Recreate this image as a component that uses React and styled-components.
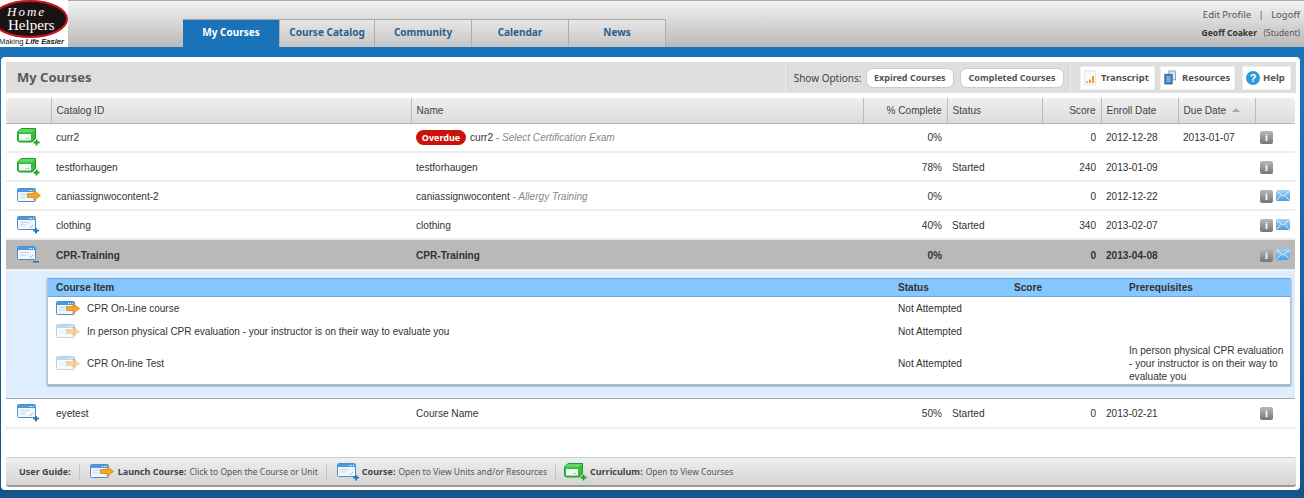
import styled, { createGlobalStyle } from "styled-components";

const GlobalStyle = createGlobalStyle`
  html, body {
    margin: 0;
    height: 498px;
    overflow: hidden;
    background: linear-gradient(#1a72b8 0, #1a72b8 100px, #12558a 498px);
    font-family: "Liberation Sans", Arial, sans-serif;
  }
`;

const tahoma = `"Noto Sans", "DejaVu Sans", sans-serif`;

const courses = [
  { icon: "curriculum", id: "curr2", overdue: true, name: "curr2", sub: "Select Certification Exam", pct: "0%", status: "", score: "0", enroll: "2012-12-28", due: "2013-01-07" },
  { icon: "curriculum", id: "testforhaugen", name: "testforhaugen", pct: "78%", status: "Started", score: "240", enroll: "2013-01-09", due: "" },
  { icon: "launch", id: "caniassignwocontent-2", name: "caniassignwocontent", sub: "Allergy Training", pct: "0%", status: "", score: "0", enroll: "2012-12-22", due: "", mail: true },
  { icon: "course", id: "clothing", name: "clothing", pct: "40%", status: "Started", score: "340", enroll: "2013-02-07", due: "", mail: true },
  { icon: "open", id: "CPR-Training", name: "CPR-Training", pct: "0%", status: "", score: "0", enroll: "2013-04-08", due: "", mail: true, selected: true },
  { icon: "course", id: "eyetest", name: "Course Name", pct: "50%", status: "Started", score: "0", enroll: "2013-02-21", due: "" },
];

const items = [
  { name: "CPR On-Line course", status: "Not Attempted", faded: false, prereq: "" },
  { name: "In person physical CPR evaluation - your instructor is on their way to evaluate you", status: "Not Attempted", faded: true, prereq: "" },
  { name: "CPR On-line Test", status: "Not Attempted", faded: true, prereq: "In person physical CPR evaluation - your instructor is on their way to evaluate you" },
];

const WindowShape = ({ faded }) => (
  <g opacity={faded ? 0.38 : 1}>
    <rect x="0.5" y="0.5" width="18" height="13" rx="1" fill="#f1f6fb" stroke="#4f8fc8" />
    <rect x="1" y="1" width="17" height="3" fill="#4a9ae0" />
    <path d="M12 2.500h1M14 2.500h1M16 2.500h1" stroke="#fff" />
    <path d="M3 6.500h9M3 9h6" stroke="#c8d6e4" />
  </g>
);

const CourseIcon = ({ minus }) => (
  <svg width="22" height="18" viewBox="0 0 22 18">
    <WindowShape />
    <path d="M13 12l3-3" stroke="#9ab8d4" />
    {minus ? (
      <rect x="16" y="15" width="6" height="1.500" fill="#2a70a8" />
    ) : (
      <path d="M19 12v5.500M16.200 14.700H22" stroke="#1f72b4" strokeWidth="1.800" />
    )}
  </svg>
);

const LaunchIcon = ({ faded }) => (
  <svg width="25" height="16" viewBox="0 0 25 16">
    <WindowShape faded={faded} />
    <path
      d="M10.500 5.500h6.500V2.500l6.500 5-6.500 5v-3h-6.500z"
      fill="#f5a623"
      stroke="#c9831a"
      strokeWidth="0.700"
      opacity={faded ? 0.42 : 1}
    />
  </svg>
);

const CurriculumIcon = () => (
  <svg width="23" height="18" viewBox="0 0 23 18">
    <path d="M0.500 4L4 0.500H18.500V10.500L15 14H2L0.500 12.500z" fill="#35bc3c" stroke="#249a2c" />
    <path d="M1 4.200L4.200 1H18L15 4.200z" fill="#5fd565" />
    <rect x="2" y="6" width="12" height="6.500" fill="#f2faf2" />
    <path d="M9 10.500h1M11 10.500h1" stroke="#6fbf75" />
    <path d="M19.500 11.500v6M16.500 14.500h6" stroke="#17a326" strokeWidth="1.800" />
  </svg>
);

const RowIcon = ({ type }) => {
  if (type === "curriculum") return <CurriculumIcon />;
  if (type === "launch") return <LaunchIcon />;
  if (type === "open") return <CourseIcon minus />;
  return <CourseIcon />;
};

const InfoBtn = styled.span`
  display: inline-flex;
  align-items: center;
  justify-content: center;
  width: 13px;
  height: 13px;
  border-radius: 2px;
  background: linear-gradient(#b8b8b8, #757575);
  color: #fff;
  font: bold 10px "Liberation Serif", serif;
`;

const MailIcon = () => (
  <svg width="14" height="12" viewBox="0 0 14 12">
    <defs>
      <linearGradient id="mailFill" x1="0" y1="0" x2="0" y2="1">
        <stop offset="0" stopColor="#a4d2f3" />
        <stop offset="1" stopColor="#4a9cdc" />
      </linearGradient>
    </defs>
    <rect width="14" height="11" rx="1" fill="url(#mailFill)" />
    <path d="M0.500 1l6.500 5 6.500-5M0.500 10.500L5 5.500M13.500 10.500L9 5.500" fill="none" stroke="#e3f2fc" />
  </svg>
);

const ChartIcon = () => (
  <svg width="12" height="16" viewBox="0 0 12 16">
    <rect x="0.500" y="1" width="11" height="14" fill="#f8f8f8" stroke="#e6e6e6" />
    <path d="M3 13v-1.500M6 13v-3.500M9 13v-7" stroke="#f0a020" strokeWidth="2" />
  </svg>
);

const ResIcon = () => (
  <svg width="13" height="17" viewBox="0 0 16 17">
    <rect x="6" y="0.500" width="8" height="11" fill="#dfe6ee" stroke="#8093a8" />
    <rect x="1" y="4.500" width="9" height="12" fill="#3d84c4" stroke="#245f96" />
    <path d="M3 8h5M3 10.500h5M3 13h5" stroke="#d5e8f8" />
  </svg>
);

const HelpIcon = () => (
  <svg width="14" height="14" viewBox="0 0 14 14">
    <circle cx="7" cy="7" r="7" fill="#2a9bd8" />
    <text x="7" y="11" textAnchor="middle" fontSize="11" fontWeight="bold" fill="#fff" fontFamily="Liberation Sans">?</text>
  </svg>
);

const Logo = () => (
  <svg width="68" height="47" viewBox="0 0 68 47">
    <rect width="68" height="47" fill="#fff" />
    <ellipse cx="30" cy="19" rx="37" ry="18" fill="#1b1313" stroke="#c8141e" strokeWidth="2" />
    <text x="7" y="16" fill="#fff" fontFamily="Liberation Serif" fontStyle="italic" fontSize="13" letterSpacing="2">Home</text>
    <text x="8" y="29.500" fill="#fff" fontFamily="Liberation Serif" fontSize="15">Helpers</text>
    <text x="-1" y="44" fill="#222" fontFamily="Liberation Sans" fontSize="7.600">Making <tspan fontStyle="italic" fontWeight="bold">Life Easier</tspan></text>
  </svg>
);

const App = () => {
  return (
    <>
      <GlobalStyle />
      <Header>
        <Logo />
        <Tabs>
          <Tab $active>My Courses</Tab>
          <Tab $w={95}>Course Catalog</Tab>
          <Tab $w={97}>Community</Tab>
          <Tab>Calendar</Tab>
          <Tab>News</Tab>
        </Tabs>
        <UserBox>
          <div>Edit Profile &nbsp; | &nbsp; Logoff</div>
          <UserLine><b>Geoff Coaker</b> &nbsp; (Student)</UserLine>
        </UserBox>
      </Header>
      <Panel>
        <TitleBar>
          <Title>My Courses</Title>
          <Options>
            <OptionLabel>Show Options:</OptionLabel>
            <Pill>Expired Courses</Pill>
            <Pill>Completed Courses</Pill>
          </Options>
          <Tools>
            <ToolBtn><ChartIcon />Transcript</ToolBtn>
            <ToolBtn><ResIcon />Resources</ToolBtn>
            <ToolBtn $help><HelpIcon />Help</ToolBtn>
          </Tools>
        </TitleBar>
        <Grid>
          <colgroup>
            <col width="45" />
            <col width="360" />
            <col width="452" />
            <col width="84" />
            <col width="95" />
            <col width="59" />
            <col width="77" />
            <col width="77" />
            <col width="40" />
          </colgroup>
          <thead>
            <tr>
              <Th />
              <Th>Catalog ID</Th>
              <Th>Name</Th>
              <Th $right>% Complete</Th>
              <Th>Status</Th>
              <Th $right>Score</Th>
              <Th>Enroll Date</Th>
              <Th>Due Date <SortArrow /></Th>
              <Th />
            </tr>
          </thead>
          <tbody>
            {courses.map((c) => (
              <CourseRows key={c.id} c={c} />
            ))}
          </tbody>
        </Grid>
        <Footer>
          <GuideLabel>User Guide:</GuideLabel>
          <GuideItem><LaunchIcon /><b>Launch Course:</b><span>Click to Open the Course or Unit</span></GuideItem>
          <GuideItem><CourseIcon /><b>Course:</b><span>Open to View Units and/or Resources</span></GuideItem>
          <GuideItem $tight><CurriculumIcon /><b>Curriculum:</b><span>Open to View Courses</span></GuideItem>
        </Footer>
      </Panel>
    </>
  );
};

const CourseRows = ({ c }) => (
  <>
    <Row $selected={c.selected}>
      <IconCell><RowIcon type={c.icon} /></IconCell>
      <Td>{c.id}</Td>
      <Td>
        {c.overdue && <Badge>Overdue</Badge>}
        {c.name}
        {c.sub && <Sub> - {c.sub}</Sub>}
      </Td>
      <Td $right>{c.pct}</Td>
      <Td>{c.status}</Td>
      <Td $right>{c.score}</Td>
      <Td>{c.enroll}</Td>
      <Td>{c.due}</Td>
      <ActionCell>
        <InfoBtn>i</InfoBtn>
        {c.mail && <MailIcon />}
      </ActionCell>
    </Row>
    {c.selected && (
      <tr>
        <Expanded colSpan={9}>
          <SubTable>
            <SubHead>
              <span>Course Item</span>
              <span>Status</span>
              <span>Score</span>
              <span>Prerequisites</span>
            </SubHead>
            {items.map((it) => (
              <SubRow key={it.name} $tall={!!it.prereq}>
                <ItemName><LaunchIcon faded={it.faded} />{it.name}</ItemName>
                <span>{it.status}</span>
                <span />
                <span>{it.prereq}</span>
              </SubRow>
            ))}
          </SubTable>
        </Expanded>
      </tr>
    )}
  </>
);

export default App;

const Header = styled.header`
  height: 46px;
  border-top: 1px solid #aaa;
  display: flex;
  align-items: flex-end;
  background: linear-gradient(#f2f2f2, #b9b9b9);
  box-sizing: content-box;
  > svg { margin-top: -1px; flex: none; display: block; }
`;

const Tabs = styled.nav`
  display: flex;
  margin-left: 115px;
  height: 28px;
`;

const Tab = styled.div`
  width: ${(p) => p.$w || 97}px;
  box-sizing: border-box;
  padding-bottom: 3px;
  display: flex;
  align-items: center;
  justify-content: center;
  font: bold 10px ${tahoma};
  color: ${(p) => (p.$active ? "#fff" : "#2b5f8c")};
  background: ${(p) => (p.$active ? "#1a72b8" : "linear-gradient(#e6e6e6, #c6c6c6)")};
  border-right: 1px solid #aeaeae;
  border-top: 1px solid #a5a5a5;
`;

const UserBox = styled.div`
  margin-left: auto;
  align-self: flex-start;
  padding: 8px 4px 0 0;
  text-align: right;
  font: 9.500px/12px ${tahoma};
  color: #555;
`;

const UserLine = styled.div`
  margin-top: 6px;
  font-size: 8.500px;
  b { color: #333; }
`;

const Panel = styled.main`
  margin: 10px 4px 0 1px;
  padding: 5px 4px 3px 5px;
  height: 425px;
  background: #fff;
  border-radius: 4px;
  display: flex;
  flex-direction: column;
`;

const TitleBar = styled.div`
  height: 31px;
  flex: none;
  display: flex;
  align-items: center;
  background: #dedede;
  padding-left: 11px;
`;

const Title = styled.h1`
  margin: 0 0 2px;
  font: bold 13px ${tahoma};
  color: #5a5a5a;
  flex: 1;
`;

const Options = styled.div`
  display: flex;
  align-items: center;
  gap: 6px;
  height: 31px;
  padding: 0 6px 0 8px;
  border-left: 1px solid #eee;
  border-right: 1px solid #eee;
`;

const OptionLabel = styled.span`
  margin-right: -2px;
  font: 10px ${tahoma};
  color: #444;
`;

const Pill = styled.span`
  height: 20px;
  box-sizing: border-box;
  padding: 0 7.500px;
  display: flex;
  align-items: center;
  border: 1px solid #ccc;
  border-radius: 7px;
  background: #fff;
  font: bold 9px ${tahoma};
  color: #555;
`;

const Tools = styled.div`
  display: flex;
  align-items: center;
  gap: 5px;
  margin: 0 5px 0 9px;
`;

const ToolBtn = styled.span`
  height: 24px;
  flex: none;
  box-sizing: border-box;
  width: ${(p) => (p.$help ? "49px" : "75px")};
  margin-left: ${(p) => (p.$help ? "2px" : "0")};
  padding-left: 3px;
  display: flex;
  align-items: center;
  gap: ${(p) => (p.$help ? "3px" : "5px")};
  background: #fff;
  border: 1px solid #eee;
  font: bold 9.500px ${tahoma};
  color: #555;
`;

const Grid = styled.table`
  margin-top: 5px;
  width: 1289px;
  flex: none;
  table-layout: fixed;
  border-collapse: collapse;
  font-size: 10.100px;
  color: #333;
`;

const Th = styled.th`
  height: 25px;
  padding: 0 5px;
  box-sizing: border-box;
  font-weight: normal;
  text-align: ${(p) => (p.$right ? "right" : "left")};
  background: linear-gradient(#efefef, #dcdcdc);
  border-left: 1px solid #bbb;
  border-bottom: 1px solid #b5b5b5;
  color: #444;
  &:first-child { border-left: 0; border-radius: 3px 0 0 3px; }
  &:last-child { border-radius: 0 3px 3px 0; }
`;

const SortArrow = styled.span`
  display: inline-block;
  margin-left: 3px;
  vertical-align: 2px;
  border: 4px solid transparent;
  border-top: 0;
  border-bottom: 4px solid #aaa;
`;

const Row = styled.tr`
  height: ${(p) => (p.$selected ? 31 : 29)}px;
  border-bottom: 2px solid #eee;
  background: ${(p) => (p.$selected ? "#b9b9b9" : "#fff")};
  font-weight: ${(p) => (p.$selected ? "bold" : "normal")};
  border-top: ${(p) => (p.$selected ? "1px solid #8e8e8e" : "0")};
`;

const Td = styled.td`
  padding: 1px 5px 0;
  white-space: nowrap;
  text-align: ${(p) => (p.$right ? "right" : "left")};
`;

const IconCell = styled.td`
  padding: 0 0 0 11px;
  svg { display: block; }
`;

const ActionCell = styled.td`
  padding: 1px 0 0 5px;
  > * { vertical-align: middle; }
  svg { margin-left: 3px; }
`;

const Badge = styled.span`
  display: inline-block;
  width: 50px;
  height: 15px;
  margin-right: 4px;
  border-radius: 8px;
  background: #c8120a;
  color: #fff;
  text-align: center;
  font: bold 9px/15px ${tahoma};
`;

const Sub = styled.i`
  color: #888;
`;

const Expanded = styled.td`
  padding: 7px 4px 13px 41px;
  background: #deeeff;
  border-bottom: 1px solid #aaa;
`;

const SubTable = styled.div`
  background: #fff;
  border: 1px solid #a5c5e0;
  border-top: 0;
  box-shadow: 0 1px 2px #888;
`;

const columns = "842px 116px 115px 1fr";

const SubHead = styled.div`
  display: grid;
  grid-template-columns: ${columns};
  height: 19px;
  align-items: center;
  padding-left: 8px;
  background: #85c6ff;
  border-top: 1px solid #6aa8dc;
  border-bottom: 1px solid #6aa8dc;
  box-sizing: border-box;
  font-weight: bold;
  color: #333;
`;

const SubRow = styled.div`
  display: grid;
  grid-template-columns: ${columns};
  height: ${(p) => (p.$tall ? 41 : 23)}px;
  align-items: center;
  padding: 0 6px 0 8px;
  color: #333;
  line-height: 13px;
`;

const ItemName = styled.span`
  display: flex;
  align-items: center;
  gap: 6px;
  font-size: 10px;
`;

const Footer = styled.footer`
  margin-top: auto;
  height: 30px;
  flex: none;
  display: flex;
  align-items: center;
  padding-left: 13px;
  box-sizing: border-box;
  background: linear-gradient(#efefef, #d4d4d4);
  border-top: 1px solid #ccc;
  border-bottom: 2px solid #999;
  border-radius: 3px;
  font: 8.500px ${tahoma};
  color: #555;
`;

const GuideLabel = styled.b`
  padding-right: 8px;
  font-size: 9px;
  color: #444;
`;

const GuideItem = styled.span`
  display: flex;
  align-items: center;
  gap: 3px;
  padding: 0 8px 0 ${(p) => (p.$tight ? 8 : 10)}px;
  height: 16px;
  border-left: 1px solid #c4c4c4;
  white-space: nowrap;
  b { color: #444; font-size: 9px; }
`;
